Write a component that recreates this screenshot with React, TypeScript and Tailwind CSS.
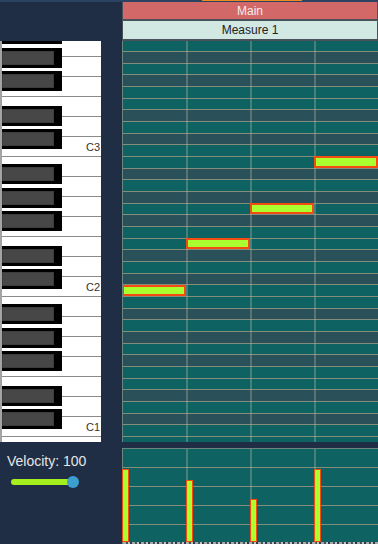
const ROW = 35 / 3;
const TOP = 33; // A3 is the first full row
const BLACK = [1, 3, 6, 8, 10];

const noteClass = (k: number) => ((k % 12) + 12) % 12;
const isBlack = (k: number) => BLACK.includes(noteClass(k));
const rows = Array.from({ length: 36 }, (_, i) => TOP - i);
const blackKeys = Array.from({ length: 36 }, (_, i) => 34 - i).filter(isBlack);

const whiteKeys: string[] = [];
for (let o = 3; o >= 1; o--) ["B", "A", "G", "F", "E", "D", "C"].forEach((n) => whiteKeys.push(n + o));
whiteKeys.push("B0");

const notes = [
  { key: 12, beat: 0 },
  { key: 16, beat: 1 },
  { key: 19, beat: 2 },
  { key: 23, beat: 3 },
];

const velocities = [73, 62, 43, 73];

const BeatLines = () => (
  <>
    {[1, 2, 3].map((b) => (
      <div key={b} className="absolute top-0 bottom-0 w-[2px] bg-[#c8c8b4]/30" style={{ left: b * 64 - 1 }} />
    ))}
  </>
);

const Piano = () => (
  <div className="relative w-[101px] h-[401px] overflow-hidden bg-white border-l-2 border-[#a4a4a4]">
    <div className="flex flex-col -mt-[23.8px]">
      {whiteKeys.map((n) => (
        <div key={n} className="h-[20px] shrink-0 border-b border-[#8a8a8a] flex items-end justify-end pr-[1px] pb-[3px]">
          {n[0] === "C" && <span className="text-[11px] leading-none text-[#333]">{n}</span>}
        </div>
      ))}
    </div>
    {blackKeys.map((k) => (
      <div
        key={k}
        className="absolute left-0 w-[60px] h-[20px] bg-black pt-[3px] pb-[3px] pr-[8px] flex"
        style={{ top: (TOP - k) * ROW + ROW / 2 - 11 }}
      >
        <div className="flex-1 bg-[#474747] border border-[#3c3c3c]" />
      </div>
    ))}
  </div>
);

const Grid = () => (
  <div className="relative flex-1 h-[401px] overflow-hidden border-l border-[#6b8580]">
    <div className="flex flex-col -mt-[0.5px]">
      {rows.map((k) =>
        isBlack(k) ? (
          <div key={k} className="h-[11.667px] shrink-0 border-b border-[#848c7c] bg-[#2a5059]" />
        ) : (
          <div key={k} className="h-[11.667px] shrink-0 border-b border-[#848c7c] bg-[#0f6262]" />
        )
      )}
    </div>
    <BeatLines />
    {notes.map((n) => (
      <div
        key={n.key}
        className="absolute h-[11.667px] w-[64px] bg-[#aaff2e] border-2 border-[#f24c12]"
        style={{ top: (TOP - n.key) * ROW - 1.5, left: n.beat * 64 - 1 }}
      />
    ))}
  </div>
);

const VelocityGrid = () => (
  <div className="relative flex-1 flex flex-col bg-[#0f6262] border-t border-l border-[#6b8580]">
    {[0, 1, 2, 3].map((i) => (
      <div key={i} className="h-[19px] shrink-0 border-b border-[#848c7c]" />
    ))}
    <div className="flex-1" />
    <div className="h-[2px] bg-[repeating-linear-gradient(90deg,#a8a8a8_0_3px,#44505c_3px_5px,#c4c4c4_5px_7px,#2c3a48_7px_9px)]" />
    <BeatLines />
    {velocities.map((h, i) => (
      <div
        key={i}
        className="absolute bottom-[2px] w-[7px] bg-[#aaff2e] border-[1.5px] border-[#f24c12]"
        style={{ left: i * 64 - 1, height: h }}
      />
    ))}
  </div>
);

export default function App() {
  return (
    <div className="w-[378px] h-[544px] bg-[#1f2e44] flex flex-col overflow-hidden font-['Liberation_Sans',Arial,sans-serif]">
      <div className="h-[2px] shrink-0 bg-[#2b4360] flex">
        <div className="w-[202px]" />
        <div className="w-[100px] h-[1px] bg-[#f08a1e]" />
      </div>
      <div className="flex h-[39px] shrink-0">
        <div className="w-[122px]" />
        <div className="flex-1 flex flex-col gap-[2px] pb-[2px] px-[1px] bg-[#4b5158]">
          <div className="h-[17px] bg-[#d26868] text-[#f4ecec] text-[12px] flex items-center justify-center">Main</div>
          <div className="h-[18px] bg-[#d2e8e2] text-[#222] text-[12px] flex items-center justify-center">Measure 1</div>
        </div>
      </div>
      <div className="flex h-[401px] shrink-0">
        <Piano />
        <div className="w-[21px]" />
        <Grid />
      </div>
      <div className="h-[6px] shrink-0" />
      <div className="flex flex-1">
        <div className="w-[122px] pl-[7px] pt-[5px]">
          <div className="text-[14px] leading-[16px] text-[#e6e6e6]">Velocity: 100</div>
          <div className="relative ml-[4px] mt-[7px] w-[68px] h-[12px]">
            <div className="absolute left-0 right-[6px] top-[3px] h-[6px] rounded-full bg-[#a4f01e]" />
            <div className="absolute left-[56px] top-0 w-[12px] h-[12px] rounded-full bg-[#3d9fd0]" />
          </div>
        </div>
        <VelocityGrid />
      </div>
    </div>
  );
}
